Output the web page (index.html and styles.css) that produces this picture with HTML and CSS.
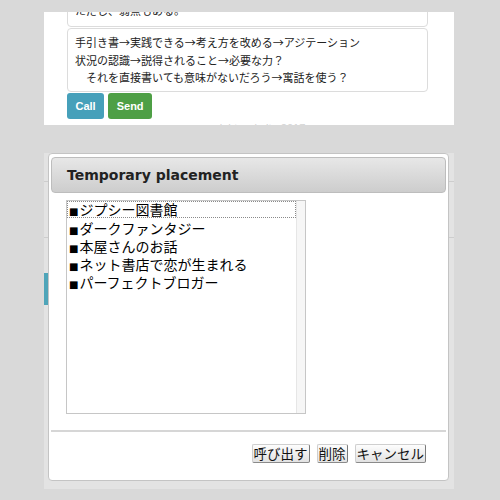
FILE: index.html
```
<!DOCTYPE html>
<html lang="ja">
<head>
<meta charset="utf-8">
<title>Temporary placement</title>
<link rel="stylesheet" href="styles.css">
</head>
<body>
<div class="page">
  <section class="top">
    <div class="card first">ただし、弱点もある。</div>
    <div class="card second">
      <div>手引き書→実践できる→考え方を改める→アジテーション</div>
      <div>状況の認識→説得されること→必要な力？</div>
      <div>　それを直接書いても意味がないだろう→寓話を使う？</div>
    </div>
    <div class="actions">
      <button class="btn btn-call">Call</button>
      <button class="btn btn-send">Send</button>
    </div>
    <div class="footer">copyright website 2017</div>
  </section>

  <section class="back">
    <div class="back-head"></div>
    <div class="back-row"></div>
    <div class="back-accent"></div>

    <div class="modal">
      <div class="modal-header">Temporary placement</div>
      <div class="listbox">
        <div class="options">
          <div class="option focused"><span class="sq">■</span>ジプシー図書館</div>
          <div class="option"><span class="sq">■</span>ダークファンタジー</div>
          <div class="option"><span class="sq">■</span>本屋さんのお話</div>
          <div class="option"><span class="sq">■</span>ネット書店で恋が生まれる</div>
          <div class="option"><span class="sq">■</span>パーフェクトブロガー</div>
        </div>
        <div class="scroll"></div>
      </div>
      <div class="separator"></div>
      <div class="modal-actions">
        <button class="old-btn">呼び出す</button>
        <button class="old-btn">削除</button>
        <button class="old-btn">キャンセル</button>
      </div>
    </div>
  </section>
</div>
</body>
</html>
```
FILE: styles.css
```
html, body {
  margin: 0;
  padding: 0;
}
body {
  background: #d9d9d9;
  font-family: "Noto Sans CJK JP", sans-serif;
}
.page {
  padding-top: 12px;
}
.top {
  margin-left: 44px;
  width: 410px;
  height: 113px;
  box-sizing: border-box;
  padding-left: 23px;
  background: #fff;
  overflow: hidden;
}
.card {
  width: 361px;
  box-sizing: border-box;
  border: 1px solid #dcdcdc;
  border-radius: 4px;
  padding: 5px 7px 4px;
  font-family: "Noto Sans CJK JP", sans-serif;
  font-size: 11px;
  line-height: 17.5px;
  color: #222;
}
.card.first {
  margin-top: -16px;
  padding-bottom: 6.5px;
}
.card.second {
  margin-top: 1px;
}
.actions {
  display: flex;
  gap: 4px;
  margin-top: 1px;
}
.btn {
  height: 26px;
  padding: 0 8.5px;
  border: 0;
  border-radius: 3px;
  color: #fff;
  font-family: "Liberation Sans", sans-serif;
  font-weight: bold;
  font-size: 11px;
}
.btn-call {
  background: #46a0ba;
}
.btn-send {
  background: #4e9f45;
}
.footer {
  margin-left: -23px;
  margin-top: 3px;
  text-align: center;
  font-family: "Liberation Sans", sans-serif;
  font-size: 11px;
  color: #d4d4d4;
}
.back {
  position: relative;
  margin-top: 28px;
  margin-left: 44px;
  width: 410px;
  height: 336px;
  background: #e3e3e3;
}
.back-head {
  height: 28px;
  border-bottom: 1px solid #cdcdcd;
}
.back-row {
  height: 55px;
  border-bottom: 1px solid #cdcdcd;
}
.back-accent {
  margin-top: 35px;
  width: 4px;
  height: 32px;
  background: #4fa5b9;
}
.modal {
  position: absolute;
  left: 4px;
  top: 0;
  width: 401px;
  height: 328px;
  box-sizing: border-box;
  border: 1px solid #c4c4c4;
  border-radius: 4px;
  background: #fff;
  padding: 3px 2px;
  display: flex;
  flex-direction: column;
}
.modal-header {
  height: 36px;
  box-sizing: border-box;
  border: 1px solid #bdbdbd;
  border-radius: 4px;
  background: linear-gradient(#e7e7e7, #cdcdcd);
  display: flex;
  align-items: center;
  padding-left: 15px;
  font-family: "DejaVu Sans", sans-serif;
  font-weight: bold;
  font-size: 14px;
  color: #222;
}
.listbox {
  margin: 7px 0 0 15px;
  width: 240px;
  height: 214px;
  box-sizing: border-box;
  border: 1px solid #c6c6c6;
  display: flex;
}
.options {
  flex: 1;
}
.option {
  height: 18px;
  line-height: 18px;
  padding-left: 2px;
  font-size: 14px;
  color: #000;
  white-space: nowrap;
}
.option.focused {
  outline: 1px dotted #8a8a8a;
  outline-offset: -1px;
  height: 17px;
  margin-bottom: 1px;
  line-height: 17px;
}
.sq {
  font-family: "DejaVu Sans", sans-serif;
  font-size: 10px;
  margin-right: 1px;
}
.scroll {
  width: 8px;
  background: #f6f6f6;
  border-left: 1px solid #e6e6e6;
}
.separator {
  margin-top: 16px;
  height: 2px;
  background: #d6d6d6;
}
.modal-actions {
  display: flex;
  justify-content: flex-end;
  gap: 7px;
  margin-top: 12px;
  padding-right: 20px;
}
.old-btn {
  height: 19px;
  padding: 0 1px;
  box-sizing: border-box;
  font-family: "Noto Sans CJK JP", sans-serif;
  font-size: 13.5px;
  line-height: 17px;
  color: #111;
  background: linear-gradient(#fdfdfd, #e2e2e2);
  border: 1px solid #cfcfcf;
  border-right-color: #7a7a7a;
  border-bottom-color: #8a8a8a;
  border-radius: 2px;
}
```
